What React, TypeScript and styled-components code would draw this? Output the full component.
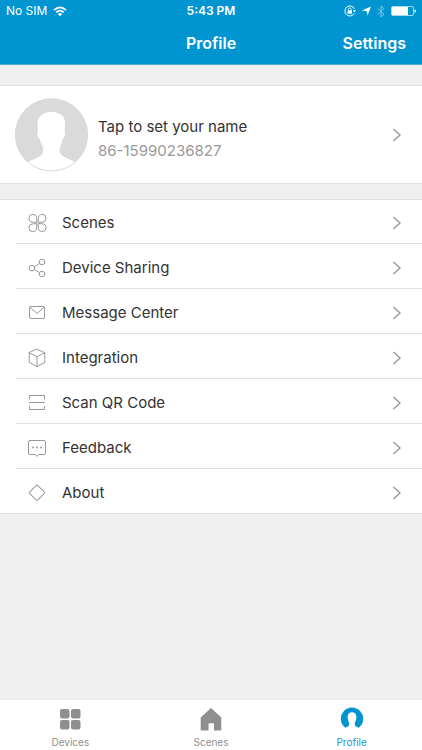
import React from "react";
import styled, { createGlobalStyle } from "styled-components";

const blue = "#0095d1";
const line = "#dfdfdf";

const GlobalStyle = createGlobalStyle`
  *, *::before, *::after { box-sizing: border-box; }
  body { margin: 0; background: #efefef; font-family: Inter, "Liberation Sans", sans-serif; color: #333; }
  button { border: 0; padding: 0; background: none; font: inherit; color: inherit; text-align: left; cursor: pointer; }
`;

const Screen = styled.div`
  display: flex;
  flex-direction: column;
  min-height: 100vh;
`;

const Header = styled.header`
  background: ${blue};
  border-bottom: 1px solid #4cacd3;
  color: #fff;
`;

const StatusBar = styled.div`
  display: grid;
  grid-template-columns: 1fr auto 1fr;
  align-items: center;
  height: 22px;
  padding: 0 6px;
  font-size: 12px;
  line-height: 16px;
`;

const StatusGroup = styled.div<{ $end?: boolean }>`
  display: flex;
  align-items: center;
  justify-content: ${(p) => (p.$end ? "flex-end" : "flex-start")};
  gap: 6px;
`;

const Clock = styled.time`
  font-weight: 600;
`;

const NavBar = styled.div`
  display: grid;
  grid-template-columns: 1fr auto 1fr;
  align-items: center;
  height: 42px;
  padding: 0 16px;
  font-size: 16px;
  font-weight: 600;
  line-height: 24px;
`;

const Title = styled.h1`
  grid-column: 2;
  margin: 0;
  font-size: 16px;
  font-weight: 600;
`;

const NavButton = styled.button`
  justify-self: end;
`;

const Main = styled.main`
  flex: 1;
  padding-top: 20px;
`;

const ProfileCard = styled.button`
  display: flex;
  align-items: center;
  gap: 10px;
  width: 100%;
  height: 99px;
  padding: 0 20px 0 15px;
  background: #fff;
  border-top: 1px solid ${line};
  border-bottom: 1px solid ${line};
`;

const ProfileText = styled.span`
  display: flex;
  flex: 1;
  flex-direction: column;
  padding-top: 8px;
`;

const Name = styled.span`
  font-size: 15px;
  line-height: 24px;
`;

const Phone = styled.span`
  font-size: 15px;
  line-height: 24px;
  color: #999;
`;

const Menu = styled.ul`
  list-style: none;
  margin: 15px 0 0;
  padding: 0 0 0 16px;
  background: linear-gradient(${line}, ${line}) top / 100% 1px no-repeat,
    linear-gradient(${line}, ${line}) bottom / 100% 1px no-repeat, #fff;
`;

const MenuRow = styled.li`
  height: 45px;
  border-bottom: 1px solid ${line};
`;

const MenuButton = styled.button`
  display: grid;
  grid-template-columns: 42px 1fr auto;
  align-items: center;
  gap: 4px;
  width: 100%;
  height: 100%;
  padding: 3px 20px 0 0;
  font-size: 15px;
  line-height: 24px;
`;

const IconSlot = styled.span`
  display: flex;
  justify-content: center;
`;

const LineIcon = styled.svg`
  display: block;
  flex: none;
  fill: none;
  stroke: #999;
  stroke-width: 1;
  stroke-linejoin: round;
  stroke-linecap: round;
`;

const ChevronIcon = styled(LineIcon)`
  stroke-width: 1.4;
  stroke-linecap: butt;
  stroke-linejoin: miter;
`;

const TabBar = styled.nav`
  display: grid;
  grid-template-columns: repeat(3, 1fr);
  height: 51px;
  background: #fff;
  border-top: 1px solid #e8e8e8;
`;

const Tab = styled.button<{ $active?: boolean }>`
  display: flex;
  flex-direction: column;
  align-items: center;
  gap: 5px;
  padding-top: 7px;
  font-size: 10px;
  line-height: 12px;
  color: ${(p) => (p.$active ? "#1c96c9" : "#8f8f8f")};
`;

function Chevron() {
  return (
    <ChevronIcon width="10" height="14" viewBox="0 0 10 14" aria-hidden="true">
      <path d="M1.500 1 8 7 1.500 13" />
    </ChevronIcon>
  );
}

const petal = "M-.8 -.8V-4.7A3.9 3.9 0 1 0 -4.7 -.8Z";

const menu = [
  {
    label: "Scenes",
    icon: (
      <g transform="translate(10.5 10)">
        {[0, 90, 180, 270].map((a) => (
          <path key={a} d={petal} transform={`rotate(${a})`} />
        ))}
      </g>
    ),
  },
  {
    label: "Device Sharing",
    icon: (
      <>
        <circle cx="5" cy="10.2" r="2.8" />
        <circle cx="15" cy="4" r="2.8" />
        <circle cx="15" cy="16" r="2.8" />
        <path d="M7.5 8.7 12.6 5.5M7.5 11.7 12.6 14.6" />
      </>
    ),
  },
  {
    label: "Message Center",
    icon: (
      <>
        <rect x="2.5" y="3.5" width="15" height="12" rx="1.5" />
        <path d="M3 4.3 10 10.5 17 4.3" />
      </>
    ),
  },
  {
    label: "Integration",
    icon: <path d="M10 1.2 17.8 4.8V14.4L10 18.6 2.2 14.4V4.8ZM2.2 4.8 10 8.6 17.8 4.8M10 8.6V18.6" />,
  },
  {
    label: "Scan QR Code",
    icon: <path d="M2.5 6V2.5H17.5V6M2.5 9.5H17.5M2.5 13.5V16.5H17.5V13.5" />,
  },
  {
    label: "Feedback",
    icon: (
      <>
        <path d="M3 2.5H17Q18.5 2.5 18.5 4V15Q18.5 16.5 17 16.5H12L10 18.3 8 16.5H3Q1.5 16.5 1.5 15V4Q1.5 2.5 3 2.5Z" />
        <path d="M6 9.5H6.1M10 9.5H10.1M14 9.5H14.1" strokeWidth="1.8" />
      </>
    ),
  },
  {
    label: "About",
    icon: <rect x="4.3" y="4" width="11.4" height="11.4" rx="1.3" transform="rotate(45 10 9.7)" />,
  },
];

function Avatar() {
  return (
    <svg width="73" height="74" viewBox="0 0 73 74" aria-hidden="true">
      <circle cx="36.5" cy="37" r="36" fill="#fff" stroke="#dadada" />
      <path
        d="M12.5 64.2A36.5 36.5 0 1 1 60.5 64.2C56.5 61.7 50.5 60.5 46.500 57C44 54.500 44.500 51 45.500 48C46.500 45 47.500 43 47.700 41C49.500 40.500 51 34 49.500 32.500C50.500 25 50.500 20.500 47 17.500C41.500 12.500 31 12.500 26 17.500C22.200 21 22 25 23 32.500C21.500 34 22.500 40.500 24.800 41C25 44 28 47 28 50C28 53 28.500 55 26.500 57C22.500 60.500 16.500 61.700 12.500 64.200Z"
        fill="#dadada"
      />
    </svg>
  );
}

export default function App() {
  return (
    <>
      <GlobalStyle />
      <Screen>
        <Header>
          <StatusBar>
            <StatusGroup>
              <span>No SIM</span>
              <svg width="14" height="11" viewBox="0 0 14 11" aria-label="Wi-Fi">
                <g fill="none" stroke="#fff" strokeWidth="1.6">
                  <path d="M1 4.100Q7-1.500 13 4.100" />
                  <path d="M3.200 6.400Q7 2.900 10.800 6.400" />
                </g>
                <path d="M4.900 8Q7 6.200 9.100 8L7 10.300Z" fill="#fff" />
              </svg>
            </StatusGroup>
            <Clock>5:43 PM</Clock>
            <StatusGroup $end>
              <svg width="12" height="12" viewBox="0 0 12 12" aria-label="Rotation lock">
                <path d="M10.500 4A5 5 0 1 0 10.200 8.500" fill="none" stroke="#fff" />
                <path d="M9 5.300H12L10.500 7.500Z" fill="#fff" />
                <rect x="3.600" y="5.300" width="4.400" height="3.400" fill="#fff" />
                <path d="M4.500 5.500V4.300a1.300 1.300 0 0 1 2.600 0V5.500" fill="none" stroke="#fff" strokeWidth=".8" />
              </svg>
              <svg width="9" height="10" viewBox="0 0 9 10" aria-label="Location">
                <path d="M9 .5 5.500 9.500 4.700 5.300 0 4.600Z" fill="#fff" />
              </svg>
              <svg width="8" height="13" viewBox="0 0 8 13" aria-label="Bluetooth">
                <path d="M.8 3.500 7 9.300 4 12V1L7 3.700.8 9.500" fill="none" stroke="#7cc6e6" />
              </svg>
              <svg width="25" height="10" viewBox="0 0 25 10" aria-label="Battery">
                <rect x=".5" y=".5" width="22" height="9" rx="1.500" fill="none" stroke="#a9d9ee" />
                <rect x="1" y="1" width="16" height="8" fill="#fff" />
                <path d="M23.500 3.500a1.500 1.500 0 0 1 0 3Z" fill="#fff" />
              </svg>
            </StatusGroup>
          </StatusBar>
          <NavBar>
            <Title>Profile</Title>
            <NavButton type="button">Settings</NavButton>
          </NavBar>
        </Header>

        <Main>
          <ProfileCard type="button">
            <Avatar />
            <ProfileText>
              <Name>Tap to set your name</Name>
              <Phone>86-15990236827</Phone>
            </ProfileText>
            <Chevron />
          </ProfileCard>

          <Menu>
            {menu.map((item) => (
              <MenuRow key={item.label}>
                <MenuButton type="button">
                  <IconSlot>
                    <LineIcon width="20" height="20" viewBox="0 0 20 20" aria-hidden="true">
                      {item.icon}
                    </LineIcon>
                  </IconSlot>
                  <span>{item.label}</span>
                  <Chevron />
                </MenuButton>
              </MenuRow>
            ))}
          </Menu>
        </Main>

        <TabBar>
          <Tab type="button">
            <svg width="24" height="24" viewBox="0 0 24 24" fill="currentColor" aria-hidden="true">
              <rect x="2" y="2" width="9.500" height="9.500" rx="2" />
              <rect x="13" y="2" width="9.500" height="9.500" rx="2" />
              <rect x="2" y="13" width="9.500" height="9.500" rx="2" />
              <rect x="13" y="13" width="9.500" height="9.500" rx="2" />
            </svg>
            <span>Devices</span>
          </Tab>
          <Tab type="button">
            <svg width="24" height="24" viewBox="0 0 24 24" fill="currentColor" aria-hidden="true">
              <path d="M12 1 22.300 10.500V22.500Q22.300 23.500 21.300 23.500H15V17Q15 16.200 14.200 16.200H10.300Q9.500 16.200 9.500 17V23.500H2.700Q1.700 23.500 1.700 22.500V10.500Z" />
            </svg>
            <span>Scenes</span>
          </Tab>
          <Tab type="button" $active aria-current="page">
            <svg width="24" height="24" viewBox="0 0 24 24" fill={blue} aria-hidden="true">
              <path d="M5.200 20.700A11.200 11.200 0 1 1 18.800 20.700C16.500 19.700 14.500 19.500 14.800 16.500C15 14.500 16.400 13.500 16.400 10C16.400 6.700 14.800 5.200 12 5.200S7.600 6.700 7.600 10C7.600 13.500 9 14.500 9.200 16.500C9.500 19.500 7.500 19.700 5.200 20.700Z" />
            </svg>
            <span>Profile</span>
          </Tab>
        </TabBar>
      </Screen>
    </>
  );
}
